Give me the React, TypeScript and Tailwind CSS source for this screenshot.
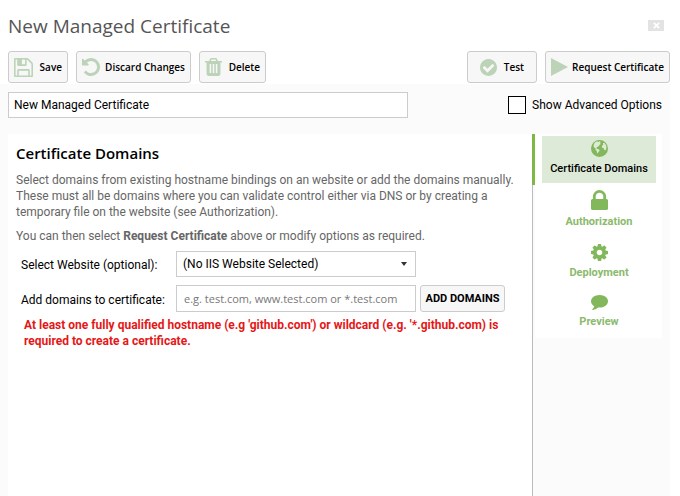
import React from "react";

const paths = {
  save: "M512 1536h768v-384h-768v384zm896 0h128v-896q0-14-10-38.5t-20-34.5l-281-281q-10-10-34-20t-39-10v416q0 40-28 68t-68 28h-576q-40 0-68-28t-28-68v-416h-128v1280h128v-416q0-40 28-68t68-28h832q40 0 68 28t28 68v416zm-384-928v-320q0-13-9.5-22.5t-22.5-9.5h-192q-13 0-22.5 9.5t-9.5 22.5v320q0 13 9.5 22.5t22.5 9.5h192q13 0 22.5-9.5t9.5-22.5zm640 32v928q0 40-28 68t-68 28h-1344q-40 0-68-28t-28-68v-1344q0-40 28-68t68-28h928q40 0 88 20t76 48l280 280q28 28 48 76t20 88z",
  undo: "M1664 896q0 156-61 298t-164 245-245 164-298 61q-172 0-327-72.5t-264-204.5q-7-10-6.5-22.5t8.5-20.5l137-138q10-9 25-9 16 2 23 12 73 95 179 147t225 52q104 0 198.5-40.5t163.5-109.5 109.5-163.5 40.5-198.5-40.5-198.5-109.5-163.5-163.5-109.5-198.5-40.5q-98 0-188 35.5t-160 101.5l137 138q31 30 14 69-17 40-59 40h-448q-26 0-45-19t-19-45v-448q0-42 40-59 39-17 69 14l130 129q107-101 244.5-156.5t284.5-55.5q156 0 298 61t245 164 164 245 61 298z",
  trash: "M704 1376v-704q0-14-9-23t-23-9h-64q-14 0-23 9t-9 23v704q0 14 9 23t23 9h64q14 0 23-9t9-23zm256 0v-704q0-14-9-23t-23-9h-64q-14 0-23 9t-9 23v704q0 14 9 23t23 9h64q14 0 23-9t9-23zm256 0v-704q0-14-9-23t-23-9h-64q-14 0-23 9t-9 23v704q0 14 9 23t23 9h64q14 0 23-9t9-23zm-544-992h448l-48-117q-7-9-17-11h-317q-10 2-17 11zm928 32v64q0 14-9 23t-23 9h-96v948q0 83-47 143.5t-113 60.5h-832q-66 0-113-58.5t-47-141.5v-952h-96q-14 0-23-9t-9-23v-64q0-14 9-23t23-9h309l70-167q15-37 54-63t79-26h320q40 0 79 26t54 63l70 167h309q14 0 23 9t9 23z",
  check: "M1412 734q0-28-18-46l-91-90q-19-19-45-19t-45 19l-408 407-226-226q-19-19-45-19t-45 19l-91 90q-18 18-18 46 0 27 18 45l362 362q19 19 45 19 27 0 46-19l543-543q18-18 18-45zm252 162q0 209-103 385.5t-279.5 279.5-385.5 103-385.5-103-279.5-279.5-103-385.5 103-385.5 279.5-279.5 385.5-103 385.5 103 279.5 279.5 103 385.5z",
  play: "M128 128L1664 896L128 1664z",
  globe: "M896 128a768 768 0 1 0 0 1536a768 768 0 1 0 0-1536zM560 290L700 240L760 330L880 250L1000 290L950 400L1010 500L900 560L850 660L740 740L640 790L620 900L750 940L880 1010L900 1120L800 1200L740 1340L680 1290L640 1130L540 1010L560 920L440 830L360 690L400 470zM1200 420L1330 380L1470 560L1520 720L1500 960L1400 1080L1320 1010L1300 900L1180 860L1110 760L1140 620L1240 560z",
  lock: "M640 768h512v-192q0-106-75-181t-181-75-181 75-75 181v192zm832 96v576q0 40-28 68t-68 28h-960q-40 0-68-28t-28-68v-576q0-40 28-68t68-28h32v-192q0-184 132-316t316-132 316 132 132 316v192h32q40 0 68 28t28 68z",
  cog: "M1152 896q0-106-75-181t-181-75-181 75-75 181 75 181 181 75 181-75 75-181zm512-109v222q0 12-8 23t-20 13l-185 28q-19 54-39 91 35 50 107 138 10 12 10 25t-9 23q-27 37-99 108t-94 71q-12 0-26-9l-138-108q-44 23-91 38-16 136-29 186-7 28-36 28h-222q-14 0-24.5-8.5t-11.5-21.5l-28-184q-49-16-90-37l-141 107q-10 9-25 9-14 0-25-11-126-114-165-168-7-10-7-23 0-12 8-23 15-21 51-66.5t54-70.5q-27-50-41-99l-183-27q-13-2-21-12.5t-8-23.5v-222q0-12 8-23t19-13l186-28q14-46 39-92-40-57-107-138-10-12-10-24 0-10 9-23 26-36 98.5-107.5t94.5-71.5q13 0 26 10l138 107q44-23 91-38 16-136 29-186 7-28 36-28h222q14 0 24.5 8.5t11.5 21.5l28 184q49 16 90 37l142-107q9-9 24-9 13 0 25 10 129 119 165 170 7 8 7 22 0 12-8 23-15 21-51 66.5t-54 70.5q26 50 41 98l183 28q13 2 21 12.5t8 23.5z",
  comment: "M1792 896q0 174-120 321.5t-326 233-450 85.5q-70 0-145-8-198 175-460 242-49 14-114 22-17 2-30.5-9t-17.5-29v-1q-3-4-.5-12t2-10 4.5-9.5l6-9 7-8.5 8-9q7-8 31-34.5t34.5-38 31-39.5 32.5-51 27-59 26-76q-157-89-247.5-220t-90.5-281q0-130 71-248.5t191-204.5 286-136.5 348-50.5q244 0 450 85.5t326 233 120 321.5z",
};

type IconName = keyof typeof paths;

// Crops each glyph to its ink so icons can be sized by their visible box.
const boxes: Record<IconName, string> = {
  save: "128 128 1536 1536",
  undo: "128 128 1536 1536",
  trash: "192 128 1408 1536",
  check: "128 128 1536 1536",
  play: "128 128 1536 1536",
  globe: "128 128 1536 1536",
  lock: "320 128 1152 1408",
  cog: "128 128 1536 1536",
  comment: "0 256 1792 1536",
};

function Icon({ name, className }: { name: IconName; className: string }) {
  return (
    <svg viewBox={boxes[name]} className={className} fill="currentColor" fillRule="evenodd" preserveAspectRatio="none" aria-hidden="true">
      <path d={paths[name]} />
    </svg>
  );
}

function ToolButton({ name, icon, className, children }: { name: IconName; icon: string; className: string; children: string }) {
  return (
    <button
      type="button"
      className={`flex h-8 items-center justify-between whitespace-nowrap rounded-[3px] border border-[#cccccc] bg-[#f7f7f7] font-['Open_Sans','Noto_Sans',sans-serif] text-[10px] leading-4 font-semibold text-black ${className}`}
    >
      <Icon name={name} className={`shrink-0 text-[#bcd3b8] ${icon}`} />
      <span>{children}</span>
    </button>
  );
}

function NavTab({ name, icon, selected, children }: { name: IconName; icon: string; selected?: boolean; children: string }) {
  return (
    <button
      type="button"
      role="tab"
      aria-selected={!!selected}
      className={`flex flex-col items-center whitespace-nowrap text-[11px] leading-4 ${
        selected ? "h-[47px] bg-[#deead8] pt-1 font-medium text-black" : "pt-[7px] pb-[7px] font-bold text-[#8bba6c]"
      }`}
    >
      <Icon name={name} className={`mb-1 shrink-0 text-[#82b75b] ${icon}`} />
      <span>{children}</span>
    </button>
  );
}

export default function App() {
  return (
    <div className="flex min-h-screen flex-col bg-white pr-[10px] font-[Roboto,'Open_Sans',sans-serif] text-[12px] leading-4 text-black">
      <header className="flex h-[51px] items-center justify-between pr-[6px] pl-2">
        <h1 className="font-['Open_Sans','Noto_Sans',sans-serif] text-[19px] leading-7 text-[#555555]">New Managed Certificate</h1>
        <button type="button" aria-label="Close" className="flex h-[11px] w-4 items-center justify-center bg-[#e3e3e3] text-white">
          <svg viewBox="0 0 8 8" className="h-[7px] w-[7px]" stroke="currentColor" strokeWidth="2" aria-hidden="true">
            <path d="M1 1L7 7M7 1L1 7" />
          </svg>
        </button>
      </header>

      <div className="flex justify-between pb-[1px] pl-2">
        <div className="flex gap-2">
          <ToolButton name="save" icon="h-[19px] w-[19px]" className="w-[60px] px-[5px]">Save</ToolButton>
          <ToolButton name="undo" icon="h-[18px] w-[18px]" className="w-[115px] px-[5px]">Discard Changes</ToolButton>
          <ToolButton name="trash" icon="h-[18px] w-[17px]" className="w-[67px] px-[5px]">Delete</ToolButton>
        </div>
        <div className="flex gap-2">
          <ToolButton name="check" icon="h-[17px] w-[17px]" className="w-[70px] px-3">Test</ToolButton>
          <ToolButton name="play" icon="h-[18px] w-[17px]" className="w-[125px] px-[5px]">Request Certificate</ToolButton>
        </div>
      </div>

      <div className="flex grow flex-col bg-[#fbfbfb] pl-2">
        <div className="flex items-start justify-between pt-2 pr-2">
          <input
            aria-label="Certificate name"
            defaultValue="New Managed Certificate"
            className="h-[26px] w-[400px] border border-[#cccccc] bg-white px-[5px] text-[12px]"
          />
          <label className="flex items-center gap-[6px] pt-1">
            <input type="checkbox" className="h-[18px] w-[18px] appearance-none border border-black bg-white checked:bg-black" />
            Show Advanced Options
          </label>
        </div>

        <div className="mt-4 flex grow">
          <main className="min-w-0 grow bg-white pt-[9px] pl-2">
            <h2 className="font-['Open_Sans','Noto_Sans',sans-serif] text-[15px] leading-5 font-semibold">Certificate Domains</h2>
            <p className="mt-[9px] whitespace-nowrap text-[#666666]">
              Select domains from existing hostname bindings on an website or add the domains manually.
              <br />
              These must all be domains where you can validate control either via DNS or by creating a
              <br />
              temporary file on the website (see Authorization).
            </p>
            <p className="mt-2 whitespace-nowrap text-[#666666]">
              You can then select <b>Request Certificate</b> above or modify options as required.
            </p>

            <div className="mt-[7px] grid grid-cols-[155px_240px_84px] items-center gap-y-2 pl-[5px]">
              <label htmlFor="website" className="pt-[2px] whitespace-nowrap">Select Website (optional):</label>
              <div className="relative">
                <select id="website" className="h-[26px] w-full appearance-none border border-[#cccccc] bg-white px-[6px] text-[12px]">
                  <option>(No IIS Website Selected)</option>
                </select>
                <svg viewBox="0 0 6 4" className="pointer-events-none absolute top-[11px] right-[9px] h-1 w-[6px]" aria-hidden="true">
                  <path d="M0 0H6L3 4z" fill="#333" />
                </svg>
              </div>
              <span />
              <label htmlFor="domains" className="pt-[2px] whitespace-nowrap">Add domains to certificate:</label>
              <input
                id="domains"
                placeholder="e.g. test.com, www.test.com or *.test.com"
                className="h-[27px] border border-[#cccccc] bg-white px-[7px] font-['Open_Sans','Noto_Sans',sans-serif] text-[11px] placeholder:text-[#777777]"
              />
              <button
                type="button"
                className="ml-1 h-[27px] w-[85px] whitespace-nowrap rounded-[3px] border border-[#cccccc] bg-[#f7f7f7] text-[11px] font-bold"
              >
                ADD DOMAINS
              </button>
            </div>

            <p className="mt-[5px] pl-2 font-bold whitespace-nowrap text-[#e51717]">
              At least one fully qualified hostname (e.g 'github.com') or wildcard (e.g. '*.github.com) is
              <br />
              required to create a certificate.
            </p>
          </main>

          <aside className="flex w-[138px] shrink-0">
            <div className="flex w-[3px] flex-col">
              <div className="h-[51px] bg-[#7cb944]" />
              <div className="w-px grow bg-[#bbbbbb]" />
            </div>
            <div role="tablist" className="mr-2 flex h-[204px] grow flex-col bg-white pt-[2px] pr-[6px] pl-[7px]">
              <NavTab name="globe" icon="h-[17px] w-[17px]" selected>Certificate Domains</NavTab>
              <NavTab name="lock" icon="h-5 w-[17px]">Authorization</NavTab>
              <NavTab name="cog" icon="h-[17px] w-[17px]">Deployment</NavTab>
              <NavTab name="comment" icon="h-[15px] w-[17px]">Preview</NavTab>
            </div>
          </aside>
        </div>
      </div>
    </div>
  );
}
